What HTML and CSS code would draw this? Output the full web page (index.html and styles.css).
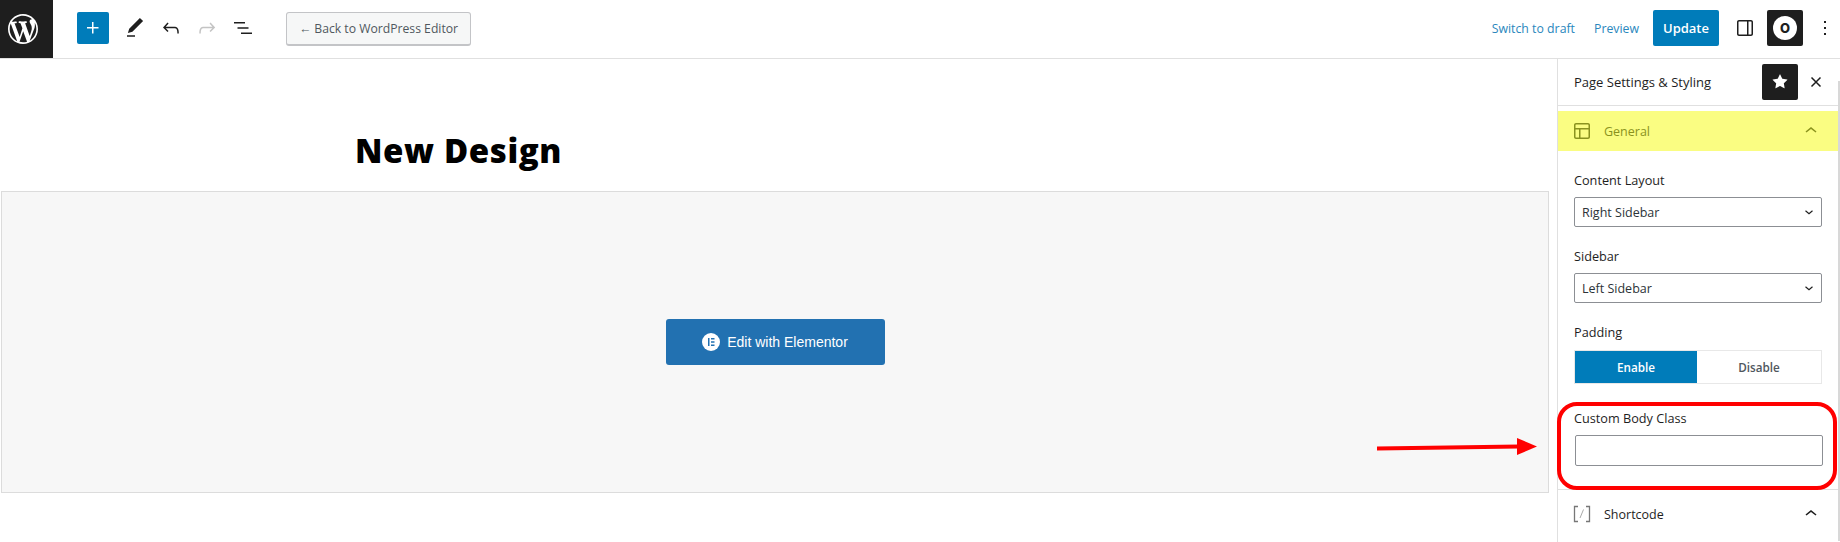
FILE: index.html
```html
<!DOCTYPE html>
<html lang="en">
<head>
    <meta charset="UTF-8">
    <title>New Design</title>
    <link rel="stylesheet" href="styles.css">
</head>
<body>

<header class="topbar">
    <a class="wp-logo">
        <svg width="30" height="30" viewBox="0 0 20 20"><path fill="#fff" d="M20 10c0-5.510-4.490-10-10-10C4.480 0 0 4.490 0 10c0 5.520 4.480 10 10 10 5.510 0 10-4.480 10-10zM7.780 15.370L4.370 6.220c.550-.020 1.170-.080 1.170-.080.500-.060.440-1.130-.060-1.110 0 0-1.450.110-2.370.110-.180 0-.370 0-.580-.010C4.120 2.690 6.870 1.110 10 1.110c2.330 0 4.450.870 6.050 2.340-.680-.110-1.650.390-1.650 1.580 0 .740.450 1.360.900 2.100.350.610.550 1.360.550 2.460 0 1.490-1.400 5-1.400 5l-3.030-8.370c.540-.020.820-.170.820-.170.500-.050.440-1.250-.060-1.220 0 0-1.440.120-2.380.120-.870 0-2.330-.120-2.330-.120-.500-.030-.560 1.200-.060 1.220l.920.080 1.260 3.410zM17.410 10c.240-.640.740-1.870.430-4.250.700 1.290 1.050 2.710 1.050 4.250 0 3.290-1.730 6.240-4.400 7.780.970-2.590 1.940-5.200 2.920-7.780zM6.100 18.090C3.120 16.650 1.110 13.530 1.110 10c0-1.300.230-2.480.720-3.590C3.250 10.300 4.670 14.200 6.100 18.090zm4.030-6.630l2.580 6.980c-.860.290-1.760.450-2.710.450-.790 0-1.570-.110-2.290-.330.810-2.380 1.620-4.740 2.420-7.100z"/></svg>
    </a>
    <div class="tools">
        <button class="add-btn">
            <svg width="24" height="24" viewBox="0 0 24 24"><path fill="#fff" d="M11 12.500V17.500H12.500V12.500H17.500V11H12.500V6H11V11H6V12.500H11Z"/></svg>
        </button>
        <svg class="tool pencil" width="24" height="24" viewBox="0 0 24 24"><path fill="#1e1e1e" d="M20.100 5.100L16.900 2 6.200 12.700l-1.300 4.400 4.500-1.300L20.100 5.100zM4 20.800h8v-1.500H4v1.500z"/></svg>
        <svg class="tool undo" width="24" height="24" viewBox="0 0 24 24"><path fill="#1e1e1e" d="M18.300 11.700c-.600-.600-1.400-.900-2.300-.900H6.700l2.900-3.300-1.100-1-4.500 5L8.500 16l1-1-2.700-2.700H16c.500 0 .900.200 1.300.500 1 1 1 3.400 1 4.500v.300h1.500v-.200c0-1.500 0-4.300-1.500-5.700z"/></svg>
        <svg class="tool redo" width="24" height="24" viewBox="0 0 24 24"><path fill="#c4c4c4" d="M15.600 6.500l-1.100 1 2.900 3.300H8c-.900 0-1.700.300-2.300.900-1.400 1.500-1.400 4.200-1.400 5.600v.200h1.500v-.300c0-1.100 0-3.500 1-4.500.300-.300.700-.500 1.300-.500h9.200L14.500 15l1.100 1.100 4.600-4.600-4.600-5z"/></svg>
        <svg class="tool" width="24" height="24" viewBox="0 0 24 24"><path fill="#1e1e1e" d="M3 6h11v1.500H3V6zm3.500 5.250h11v1.500h-11v-1.500zM10 16.500h11V18H10v-1.500z"/></svg>
        <button class="back-btn">&larr; Back to WordPress Editor</button>
    </div>
    <div class="actions">
        <a class="link-btn draft">Switch to draft</a>
        <a class="link-btn preview">Preview</a>
        <button class="update-btn">Update</button>
        <svg class="panel-icon" width="24" height="24" viewBox="0 0 24 24"><path fill="#1e1e1e" d="M18 4H6c-1.100 0-2 .900-2 2v12c0 1.100.900 2 2 2h12c1.100 0 2-.900 2-2V6c0-1.100-.900-2-2-2zM5.500 18V6c0-.300.200-.500.500-.500h8v13H6c-.300 0-.500-.200-.500-.500zm13 0c0 .300-.200.500-.500.500h-2.500v-13H18c.300 0 .500.200.500.500v12z"/></svg>
        <button class="theme-btn"><span class="theme-circle">O</span></button>
        <svg class="more-icon" width="24" height="24" viewBox="0 0 24 24"><path fill="#1e1e1e" d="M13 19h-2v-2h2v2zm0-6h-2v-2h2v2zm0-6h-2V5h2v2z"/></svg>
    </div>
</header>

<div class="layout">
    <main class="editor">
        <h1 class="post-title">New Design</h1>
        <div class="elementor-box">
            <button class="elementor-btn">
                <svg width="18" height="18" viewBox="0 0 18 18"><circle cx="9" cy="9" r="9" fill="#fff"/><path fill="#2271b1" d="M6 5h1.500v8H6zM9 5h3.500v1.500H9zM9 8.250h3.500v1.500H9zM9 11.500h3.500V13H9z"/></svg>
                Edit with Elementor
            </button>
        </div>
    </main>

    <aside class="sidebar">
        <div class="sidebar-head">
            <span class="sidebar-title">Page Settings &amp; Styling</span>
            <button class="star-btn">
                <svg width="24" height="24" viewBox="0 0 24 24"><path fill="#fff" d="M11.776 4.454a.250.250 0 01.448 0l2.069 4.192a.250.250 0 00.188.137l4.626.672a.250.250 0 01.139.426l-3.348 3.263a.250.250 0 00-.072.222l.790 4.607a.250.250 0 01-.362.263l-4.138-2.175a.250.250 0 00-.232 0l-4.138 2.175a.250.250 0 01-.363-.263l.790-4.607a.250.250 0 00-.071-.222L4.754 9.881a.250.250 0 01.139-.426l4.626-.672a.250.250 0 00.188-.137l2.069-4.192z"/></svg>
            </button>
            <svg class="close-icon" width="24" height="24" viewBox="0 0 24 24"><path fill="none" stroke="#1e1e1e" stroke-width="1.500" d="M7.500 7.500l9 9M16.500 7.500l-9 9"/></svg>
        </div>

        <div class="panel-head general">
            <svg width="24" height="24" viewBox="0 0 24 24"><path fill="#8a921e" d="M18 4H6c-1.100 0-2 .900-2 2v12c0 1.100.900 2 2 2h12c1.100 0 2-.900 2-2V6c0-1.100-.900-2-2-2zM5.500 6c0-.300.200-.500.500-.500h12c.300 0 .500.200.500.500v3h-13V6zm0 12v-7.500H9v8H6c-.300 0-.500-.200-.500-.500zm13 0c0 .300-.200.500-.500.500h-7.500v-8h8V18z"/></svg>
            <span class="panel-name">General</span>
            <svg class="chevron" width="24" height="24" viewBox="0 0 24 24"><path fill="#8a921e" d="M6.500 12.400L12 8l5.500 4.400-.9 1.200L12 10l-4.500 3.600-1-1.200z"/></svg>
        </div>

        <div class="panel-body">
            <div class="field">
                <label class="field-label">Content Layout</label>
                <div class="select-box">
                    <span>Right Sidebar</span>
                    <svg width="8" height="5" viewBox="0 0 8 5"><path fill="none" stroke="#1e1e1e" stroke-width="1.200" d="M.5.800L4 3.800 7.500.800"/></svg>
                </div>
            </div>
            <div class="field">
                <label class="field-label">Sidebar</label>
                <div class="select-box">
                    <span>Left Sidebar</span>
                    <svg width="8" height="5" viewBox="0 0 8 5"><path fill="none" stroke="#1e1e1e" stroke-width="1.200" d="M.5.800L4 3.800 7.500.800"/></svg>
                </div>
            </div>
            <div class="field">
                <label class="field-label">Padding</label>
                <div class="toggle">
                    <span class="toggle-on">Enable</span>
                    <span class="toggle-off">Disable</span>
                </div>
            </div>
            <div class="field custom-class">
                <label class="field-label">Custom Body Class</label>
                <div class="text-box"></div>
            </div>
        </div>

        <div class="panel-head shortcode">
            <svg class="shortcode-icon" width="18" height="18" viewBox="0 0 18 18"><path fill="none" stroke="#777" stroke-width="1.300" d="M5 1.500H1.500v15H5M13 1.500h3.500v15H13"/><path fill="none" stroke="#aaa" d="M7 13L10.500 4.500"/></svg>
            <span class="panel-name">Shortcode</span>
            <svg class="chevron" width="24" height="24" viewBox="0 0 24 24"><path fill="#1e1e1e" d="M6.500 12.400L12 8l5.500 4.400-.9 1.200L12 10l-4.500 3.600-1-1.200z"/></svg>
        </div>
        <div class="scrollbar"></div>
    </aside>
</div>

<!-- red markup drawn over the screenshot -->
<div class="mark-box"></div>
<svg class="mark-arrow" width="170" height="24" viewBox="0 0 170 24"><path fill="none" stroke="#f00" stroke-width="4" d="M0 14.500L142 12.500"/><path fill="#f00" d="M140 4l20 8.500-20 8.500z"/></svg>

</body>
</html>
```

FILE: styles.css
```css
* {
    box-sizing: border-box;
}

html, body {
    margin: 0;
    height: 542px;
    overflow: hidden;
}

body {
    font-family: 'Open Sans', 'Noto Sans', sans-serif;
    background-color: #fff;
    color: #1e1e1e;
    position: relative;
}

button {
    border: none;
    font-family: inherit;
    padding: 0;
}

.topbar {
    display: flex;
    align-items: center;
    height: 59px;
    padding-bottom: 2px;
    border-bottom: 1px solid #e0e0e0;
}

.wp-logo {
    align-self: flex-start;
    width: 53px;
    height: 58px;
    padding-right: 7px;
    background-color: #1e1e1e;
    display: flex;
    align-items: center;
    justify-content: center;
}

.tools {
    display: flex;
    align-items: center;
    margin-left: 24px;
    gap: 12px;
}

.add-btn {
    width: 32px;
    height: 32px;
    background-color: #007cba;
    border-radius: 2px;
    display: flex;
    align-items: center;
    justify-content: center;
}

.tool {
    display: block;
}

.pencil {
    margin-left: 2px;
}

.tools .back-btn {
    margin-left: 19px;
    margin-top: 2px;
    width: 185px;
    height: 34px;
    font-size: 12.200px;
    color: #50575e;
    background-color: #f6f7f7;
    border: 1px solid #c3c4c7;
    border-bottom-width: 2px;
    border-radius: 3px;
}

.actions {
    margin-left: auto;
    display: flex;
    align-items: center;
    padding-right: 3px;
}

.link-btn {
    font-size: 12.300px;
    color: #2a87bd;
}

.preview {
    margin-left: 19px;
}

.update-btn {
    margin-left: 14px;
    width: 66px;
    height: 36px;
    background-color: #007cba;
    color: #fff;
    font-size: 13px;
    font-weight: 600;
    border-radius: 2px;
}

.panel-icon {
    margin-left: 14px;
}

.theme-btn {
    margin-left: 10px;
    width: 36px;
    height: 36px;
    background-color: #1e1e1e;
    border-radius: 2px;
    display: flex;
    align-items: center;
    justify-content: center;
}

.theme-circle {
    width: 24px;
    height: 24px;
    border-radius: 50%;
    background-color: #fff;
    color: #1e1e1e;
    font-family: Inter, sans-serif;
    font-size: 13px;
    font-weight: 800;
    display: flex;
    align-items: center;
    justify-content: center;
}

.more-icon {
    margin-left: 10px;
}

.layout {
    display: flex;
    height: 483px;
}

.editor {
    flex: 1;
    padding: 0 8px 0 1px;
}

.post-title {
    margin: 0;
    padding: 72px 0 0 354px;
    height: 132px;
    font-family: 'Open Sans', sans-serif;
    font-size: 33px;
    line-height: 40px;
    font-weight: 800;
    letter-spacing: .6px;
    color: #000;
}

.elementor-box {
    height: 302px;
    background-color: #f7f7f7;
    border: 1px solid #dcdcdc;
    display: flex;
    justify-content: center;
    align-items: center;
}

.elementor-btn {
    width: 219px;
    height: 46px;
    background-color: #2271b1;
    color: #fff;
    font-family: 'Liberation Sans', sans-serif;
    font-size: 14px;
    border-radius: 3px;
    display: flex;
    align-items: center;
    justify-content: center;
    gap: 7px;
}

.sidebar {
    width: 283px;
    border-left: 1px solid #e0e0e0;
    position: relative;
}

.sidebar-head {
    height: 47px;
    padding: 0 16px;
    border-bottom: 1px solid #e0e0e0;
    display: flex;
    align-items: center;
}

.sidebar-title {
    font-size: 13px;
    font-weight: 500;
}

.star-btn {
    margin-left: auto;
    width: 36px;
    height: 36px;
    background-color: #1e1e1e;
    border-radius: 2px;
    display: flex;
    align-items: center;
    justify-content: center;
}

.close-icon {
    margin-left: 6px;
    margin-right: -4px;
}

.panel-head {
    display: flex;
    align-items: center;
    padding: 0 16px 0 12px;
}

.general {
    margin-top: 5px;
    height: 40px;
    background-color: #fafd82;
    color: #8a921e;
}

.panel-name {
    margin-left: 10px;
    font-size: 12.500px;
}

.chevron {
    margin-left: auto;
    margin-right: 1px;
}

.panel-body {
    padding: 20px 18px 0 16px;
    height: 339px;
    border-bottom: 1px solid #e0e0e0;
}

.field {
    margin-bottom: 20px;
}

.field-label {
    display: block;
    font-size: 12.700px;
    line-height: 18px;
    margin-bottom: 8px;
    font-weight: 500;
}

.select-box {
    height: 30px;
    border: 1px solid #8c8f94;
    border-radius: 2px;
    padding: 0 8px 0 7px;
    font-size: 12.500px;
    display: flex;
    align-items: center;
    justify-content: space-between;
    color: #2c3338;
}

.toggle {
    height: 34px;
    margin-top: 9px;
    border: 1px solid #e8e8e8;
    display: flex;
    font-size: 11.700px;
    font-weight: 600;
}

.toggle span {
    display: flex;
    align-items: center;
    justify-content: center;
}

.toggle-on {
    width: 122px;
    background-color: #007cba;
    color: #fff;
}

.toggle-off {
    flex: 1;
    color: #50575e;
}

.custom-class {
    margin-top: 25px;
}

.custom-class .field-label {
    margin-bottom: 8px;
}

.text-box {
    height: 31px;
    margin-left: 1px;
    margin-right: -1px;
    border: 1px solid #8c8f94;
    border-radius: 2px;
}

.shortcode {
    height: 48px;
    padding-left: 15px;
}

.shortcode-icon {
    display: block;
    margin-right: 3px;
}

.scrollbar {
    position: absolute;
    top: 22px;
    right: 0;
    width: 2px;
    height: 460px;
    background-color: #d8d8d8;
}

.mark-box {
    position: absolute;
    left: 1557px;
    top: 402px;
    width: 280px;
    height: 88px;
    border: 4px solid #f00;
    border-radius: 20px;
}

.mark-arrow {
    position: absolute;
    left: 1377px;
    top: 434px;
}
```
